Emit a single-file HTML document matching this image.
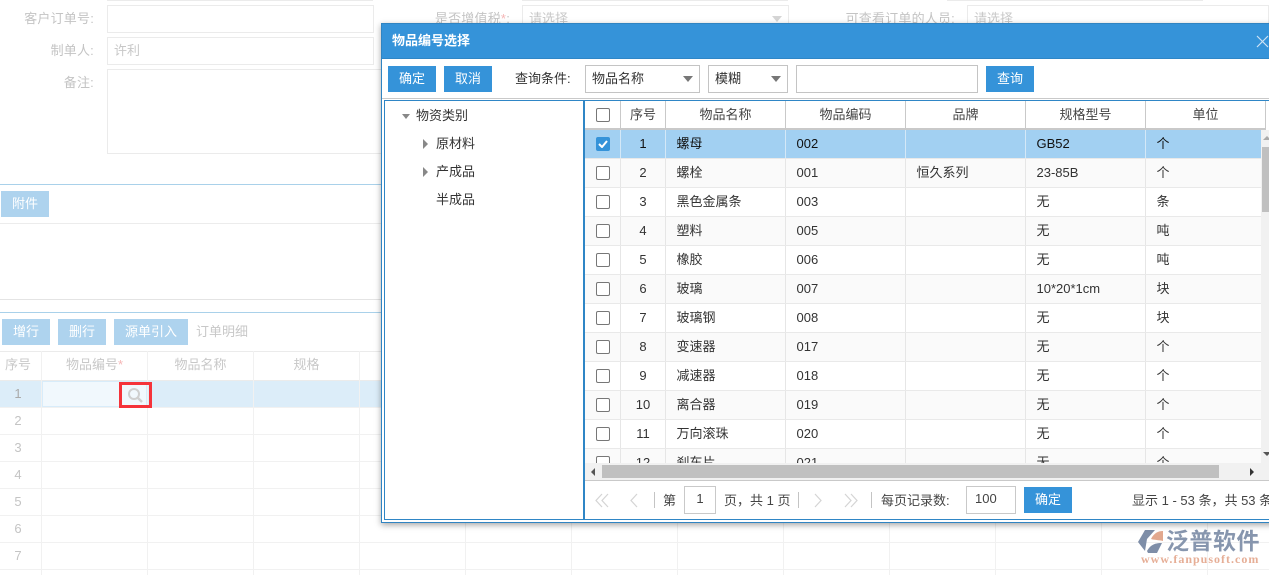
<!DOCTYPE html>
<html lang="zh"><head><meta charset="utf-8"><title>物品编号选择</title>
<style>
*{box-sizing:border-box}
html,body{margin:0;padding:0;width:1269px;height:575px;overflow:hidden;background:#fff}
body{position:relative;font:13px/16px "Liberation Sans","Noto Sans CJK SC",sans-serif;color:#333}
.a{position:absolute}
.t{position:absolute;white-space:nowrap}
.l{position:absolute;white-space:nowrap;color:#c4c4c4;text-align:right;letter-spacing:.2px}
.box{position:absolute;border:1px solid #ebebeb;background:#fff}
.bb{position:absolute;background:#aed3ee;color:#fff;text-align:center;height:26px;line-height:25px}
.h{position:absolute;background:#f1f1f1;height:1px;left:0;width:1269px}
.v{position:absolute;background:#f1f1f1;width:1px;top:351px;height:224px}
.n{position:absolute;left:0;width:36px;text-align:center;color:#c4c4c4}
.th{position:absolute;top:357px;text-align:center;color:#c8c8c8}
#m{position:absolute;left:381px;top:23px;width:900px;height:500px;background:#fff;border:1px solid #3084c2;box-shadow:0 2px 6px rgba(0,0,0,.35)}
.btn{position:absolute;background:#3593d9;color:#fff;text-align:center;height:26px;line-height:25px;width:48px}
.sel{position:absolute;border:1px solid #c4c4c4;height:28px;top:65px;line-height:25px;padding-left:6px;background:#fff}
.arr{position:absolute;width:0;height:0;border-left:5px solid transparent;border-right:5px solid transparent;border-top:6px solid #777}
.tri{position:absolute;width:0;height:0;border-top:5px solid transparent;border-bottom:5px solid transparent;border-left:6px solid #888}
table{border-collapse:collapse;table-layout:fixed;position:absolute}
td,th{height:29px;padding:0 0 0 11px;border-right:1px solid #e6e6e6;border-bottom:1px solid #e9e9e9;font-weight:400;text-align:left;overflow:hidden;white-space:nowrap;color:#333}
th{border-right:1px solid #c9c9c9;border-bottom:2px solid #c9c9c9;text-align:center;padding:0 0 0 1px;height:28px;color:#444}
td.c{padding:0 0 0 1px;text-align:center}
tr.e td{background:#fafafa}
tr.s td{background:#a2d0f2;color:#111;border-right-color:#d4e8f7}
i.cb{display:inline-block;width:14px;height:14px;border:1px solid #777;border-radius:2px;background:#fff;vertical-align:middle}
i.ck{display:inline-block;width:14px;height:14px;border-radius:2px;background:#3593d9;vertical-align:middle;position:relative}
.p{position:absolute;top:493px;color:#444;white-space:nowrap}
.sep{position:absolute;top:492px;width:1px;height:16px;background:#c4c4c4}
</style></head><body>

<!-- background page -->
<div class="a" style="left:107px;top:0;width:266px;height:1px;background:#ebebeb"></div>
<div class="a" style="left:522px;top:0;width:266px;height:1px;background:#ebebeb"></div>
<div class="a" style="left:947px;top:0;width:256px;height:1px;background:#ebebeb"></div>
<div class="l" style="left:0;width:94px;top:11px">客户订单号:</div>
<div class="box" style="left:107px;top:5px;width:267px;height:28px"></div>
<div class="l" style="left:0;width:94px;top:43px">制单人:</div>
<div class="box" style="left:107px;top:37px;width:267px;height:28px;padding:5px 6px;color:#c8c8c8">许利</div>
<div class="l" style="left:0;width:94px;top:75px">备注:</div>
<div class="box" style="left:107px;top:69px;width:290px;height:85px"></div>
<div class="l" style="left:400px;width:110px;top:11px">是否增值税<span style="color:#f5b5b5">*</span>:</div>
<div class="box" style="left:522px;top:5px;width:267px;height:28px;padding:5px 6px;color:#c8c8c8">请选择</div>
<div class="arr" style="left:772px;top:16px;border-top-color:#d5d5d5"></div>
<div class="l" style="left:820px;width:135px;top:11px">可查看订单的人员:</div>
<div class="box" style="left:967px;top:5px;width:302px;height:28px;padding:5px 6px;color:#c8c8c8">请选择</div>

<div class="a" style="left:0;top:184px;width:400px;height:1px;background:#a9d1ea"></div>
<div class="bb" style="left:1px;top:191px;width:48px">附件</div>
<div class="a" style="left:0;top:223px;width:400px;height:1px;background:#ececec"></div>
<div class="a" style="left:0;top:299px;width:400px;height:1px;background:#e4e4e4"></div>
<div class="a" style="left:0;top:312px;width:400px;height:1px;background:#a9d1ea"></div>
<div class="bb" style="left:2px;top:319px;width:48px">增行</div>
<div class="bb" style="left:58px;top:319px;width:48px">删行</div>
<div class="bb" style="left:114px;top:319px;width:74px">源单引入</div>
<div class="t" style="left:196px;top:324px;color:#c8c8c8">订单明细</div>

<div class="a" style="left:0;top:351px;width:1269px;height:1px;background:#ebebeb"></div>
<div class="a" style="left:0;top:380px;width:1269px;height:27px;background:#dcedf9"></div>
<div class="a" style="left:42px;top:381px;width:105px;height:26px;background:#f1f8fd;border:1px solid #d8ecfa"></div>
<div class="a" style="left:0;top:380px;width:1269px;height:1px;background:#ebebeb"></div>
<div class="h" style="top:407px"></div><div class="h" style="top:434px"></div><div class="h" style="top:461px"></div><div class="h" style="top:488px"></div><div class="h" style="top:515px"></div><div class="h" style="top:542px"></div><div class="h" style="top:569px"></div>
<div class="v" style="left:41px"></div><div class="v" style="left:147px"></div><div class="v" style="left:253px"></div><div class="v" style="left:359px"></div><div class="v" style="left:465px"></div><div class="v" style="left:571px"></div><div class="v" style="left:677px"></div><div class="v" style="left:783px"></div><div class="v" style="left:889px"></div><div class="v" style="left:995px"></div><div class="v" style="left:1101px"></div><div class="v" style="left:1207px"></div>
<div class="th" style="left:0;width:36px">序号</div>
<div class="th" style="left:42px;width:105px">物品编号<span style="color:#f5b5b5">*</span></div>
<div class="th" style="left:148px;width:105px">物品名称</div>
<div class="th" style="left:254px;width:105px">规格</div>
<div class="n" style="top:386px;color:#aaa">1</div><div class="n" style="top:413px">2</div><div class="n" style="top:440px">3</div><div class="n" style="top:467px">4</div><div class="n" style="top:494px">5</div><div class="n" style="top:521px">6</div><div class="n" style="top:548px">7</div>
<div class="a" style="left:119px;top:382px;width:33px;height:26px;border:3px solid #f5333a"></div>
<svg class="a" style="left:127px;top:387px" width="17" height="16" viewBox="0 0 17 16"><circle cx="7" cy="7" r="5" fill="none" stroke="#cfcfcf" stroke-width="2"/><path d="M10.500 10.500L15 15" stroke="#cfcfcf" stroke-width="2.400"/></svg>

<!-- logo -->
<svg class="a" style="left:1138px;top:529px" width="28" height="26" viewBox="0 0 28 26"><path d="M0 13L7 1H17L9 10 7 22Z" fill="#7e8ea8"/><path d="M13 10C16 4 20 2 25 2L25 12C21 11 16 11 13 10Z" fill="#e2a88e"/><path d="M9 22C13 15 18 14 24 14L19 24H10Z" fill="#7e8ea8"/></svg>
<div class="t" style="left:1166px;top:528px;font-size:23px;line-height:27px;font-weight:700;color:#8796ae;letter-spacing:.5px">泛普软件</div>
<div class="t" style="left:1141px;top:553px;font:700 12px/13px 'Liberation Serif',serif;color:#e6ae96;letter-spacing:1px">www.fanpusoft.com</div>

<!-- modal -->
<div id="m"></div>
<div class="a" style="left:382px;top:24px;width:887px;height:35px;background:#3593d9;border-bottom:1px solid #2f86c6"></div>
<div class="t" style="left:392px;top:33px;color:#fff;font-weight:700">物品编号选择</div>
<svg class="a" style="left:1256px;top:35px" width="13" height="13" viewBox="0 0 13 13"><path d="M1 1L12 12M12 1L1 12" stroke="#cfe4f5" stroke-width="1.200" fill="none"/></svg>
<div class="btn" style="left:388px;top:66px">确定</div>
<div class="btn" style="left:444px;top:66px">取消</div>
<div class="t" style="left:515px;top:71px">查询条件:</div>
<div class="sel" style="left:585px;width:115px">物品名称</div><div class="arr" style="left:683px;top:76px"></div>
<div class="sel" style="left:708px;width:80px">模糊</div><div class="arr" style="left:771px;top:76px"></div>
<div class="sel" style="left:796px;width:182px"></div>
<div class="btn" style="left:986px;top:66px">查询</div>
<div class="a" style="left:382px;top:98px;width:887px;height:1px;background:#c9c9c9"></div>
<div class="a" style="left:384px;top:100px;width:885px;height:1px;background:#2f86c6"></div>
<div class="a" style="left:384px;top:100px;width:1px;height:420px;background:#2f86c6"></div>
<div class="a" style="left:583px;top:100px;width:2px;height:420px;background:#2f86c6"></div>
<div class="a" style="left:384px;top:519px;width:885px;height:1px;background:#2f86c6"></div>

<div class="a" style="left:402px;top:114px;width:0;height:0;border-left:4px solid transparent;border-right:4px solid transparent;border-top:5px solid #888"></div>
<div class="t" style="left:416px;top:108px">物资类别</div>
<div class="tri" style="left:423px;top:139px;border-left-width:5px"></div>
<div class="t" style="left:436px;top:136px">原材料</div>
<div class="tri" style="left:423px;top:167px;border-left-width:5px"></div>
<div class="t" style="left:436px;top:164px">产成品</div>
<div class="t" style="left:436px;top:192px">半成品</div>

<div class="a" style="left:585px;top:101px;width:684px;height:362px;overflow:hidden"><table style="left:0;top:0;width:680px">
<colgroup><col style="width:35px"><col style="width:45px"><col style="width:120px"><col style="width:120px"><col style="width:120px"><col style="width:120px"><col style="width:120px"></colgroup>
<tr><th><i class="cb"></i></th><th>序号</th><th>物品名称</th><th>物品编码</th><th>品牌</th><th>规格型号</th><th>单位</th></tr>
<tr class="s"><td class="c"><i class="ck"><svg style="position:absolute;left:2px;top:3px" width="10" height="8" viewBox="0 0 10 8"><path d="M1 4L4 7L9 1" stroke="#fff" stroke-width="2" fill="none"/></svg></i></td><td class="c">1</td><td>螺母</td><td>002</td><td></td><td>GB52</td><td>个</td></tr>
<tr class="e"><td class="c"><i class="cb"></i></td><td class="c">2</td><td>螺栓</td><td>001</td><td>恒久系列</td><td>23-85B</td><td>个</td></tr>
<tr><td class="c"><i class="cb"></i></td><td class="c">3</td><td>黑色金属条</td><td>003</td><td></td><td>无</td><td>条</td></tr>
<tr class="e"><td class="c"><i class="cb"></i></td><td class="c">4</td><td>塑料</td><td>005</td><td></td><td>无</td><td>吨</td></tr>
<tr><td class="c"><i class="cb"></i></td><td class="c">5</td><td>橡胶</td><td>006</td><td></td><td>无</td><td>吨</td></tr>
<tr class="e"><td class="c"><i class="cb"></i></td><td class="c">6</td><td>玻璃</td><td>007</td><td></td><td>10*20*1cm</td><td>块</td></tr>
<tr><td class="c"><i class="cb"></i></td><td class="c">7</td><td>玻璃钢</td><td>008</td><td></td><td>无</td><td>块</td></tr>
<tr class="e"><td class="c"><i class="cb"></i></td><td class="c">8</td><td>变速器</td><td>017</td><td></td><td>无</td><td>个</td></tr>
<tr><td class="c"><i class="cb"></i></td><td class="c">9</td><td>减速器</td><td>018</td><td></td><td>无</td><td>个</td></tr>
<tr class="e"><td class="c"><i class="cb"></i></td><td class="c">10</td><td>离合器</td><td>019</td><td></td><td>无</td><td>个</td></tr>
<tr><td class="c"><i class="cb"></i></td><td class="c">11</td><td>万向滚珠</td><td>020</td><td></td><td>无</td><td>个</td></tr>
<tr class="e"><td class="c"><i class="cb"></i></td><td class="c">12</td><td>刹车片</td><td>021</td><td></td><td>无</td><td>个</td></tr>
</table></div>

<!-- scrollbars -->
<div class="a" style="left:1261px;top:130px;width:8px;height:335px;background:#f1f1f1"></div>
<div class="a" style="left:1262px;top:147px;width:7px;height:65px;background:#c0c0c0"></div>
<div class="a" style="left:1263px;top:136px;width:0;height:0;border-left:4px solid transparent;border-right:4px solid transparent;border-bottom:4px solid #aaa"></div>
<div class="a" style="left:1263px;top:452px;width:0;height:0;border-left:4px solid transparent;border-right:4px solid transparent;border-top:4px solid #555"></div>
<div class="a" style="left:585px;top:463px;width:684px;height:17px;background:#f1f1f1"></div>
<div class="a" style="left:602px;top:465px;width:617px;height:13px;background:#c0c0c0"></div>
<div class="a" style="left:591px;top:468px;width:0;height:0;border-top:4px solid transparent;border-bottom:4px solid transparent;border-right:4px solid #555"></div>
<div class="a" style="left:1250px;top:468px;width:0;height:0;border-top:4px solid transparent;border-bottom:4px solid transparent;border-left:4px solid #333"></div>
<div class="a" style="left:585px;top:480px;width:684px;height:1px;background:#c9c9c9"></div>

<!-- pager -->
<svg class="a" style="left:595px;top:493px" width="270" height="15" viewBox="0 0 270 15" fill="none" stroke="#d4d4d4" stroke-width="1.200"><path d="M7 1L1 7.500L7 14M13 1L7 7.500L13 14"/><path d="M42 1L36 7.500L42 14"/><path d="M220 1L226 7.500L220 14"/><path d="M250 1L256 7.500L250 14M256 1L262 7.500L256 14"/></svg>
<div class="sep" style="left:654px"></div>
<div class="p" style="left:663px">第</div>
<div class="a" style="left:684px;top:486px;width:32px;height:28px;border:1px solid #c9c9c9;text-align:center;line-height:24px;color:#444">1</div>
<div class="p" style="left:724px">页，共 1 页</div>
<div class="sep" style="left:798px"></div>
<div class="sep" style="left:871px"></div>
<div class="p" style="left:881px">每页记录数:</div>
<div class="a" style="left:966px;top:486px;width:50px;height:28px;border:1px solid #c9c9c9;padding-left:8px;line-height:24px;color:#444">100</div>
<div class="btn" style="left:1024px;top:487px">确定</div>
<div class="p" style="left:1132px">显示 1 - 53 条，共 53 条</div>
</body></html>
